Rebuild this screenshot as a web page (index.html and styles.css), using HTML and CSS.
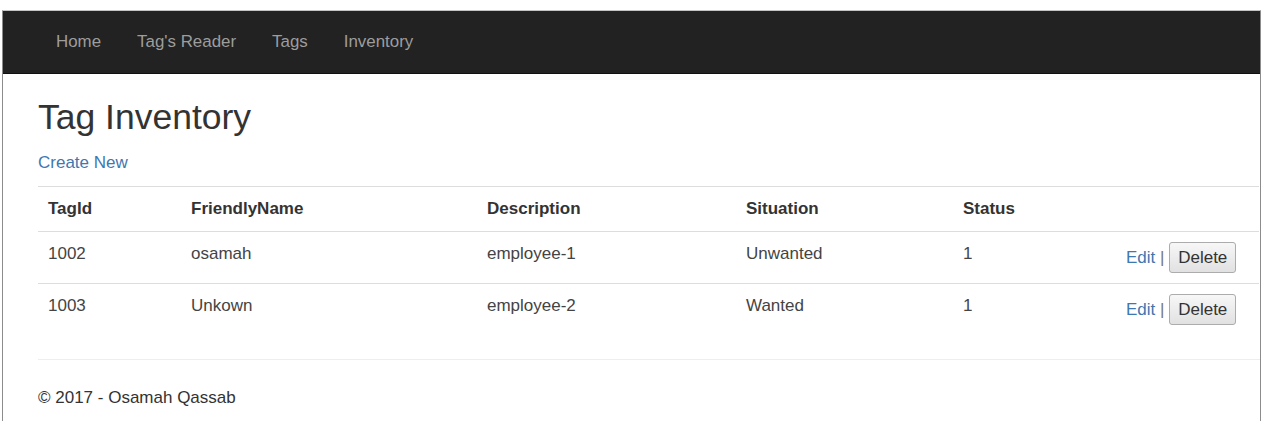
FILE: index.html
```html
<!DOCTYPE html>
<html lang="en">
<head>
<meta charset="utf-8">
<title>Tag Inventory</title>
<link rel="stylesheet" href="styles.css">
</head>
<body>
<div class="frame">
  <nav class="navbar">
    <ul class="nav">
      <li><a href="#">Home</a></li>
      <li><a href="#">Tag's Reader</a></li>
      <li><a href="#">Tags</a></li>
      <li><a href="#">Inventory</a></li>
    </ul>
  </nav>
  <main class="content">
    <h2 class="title">Tag Inventory</h2>
    <p class="create"><a href="#">Create New</a></p>
    <table class="table">
      <tr>
        <th class="c1">TagId</th>
        <th class="c2">FriendlyName</th>
        <th class="c3">Description</th>
        <th class="c4">Situation</th>
        <th class="c5">Status</th>
        <th class="c6"></th>
      </tr>
      <tr>
        <td>1002</td>
        <td>osamah</td>
        <td>employee-1</td>
        <td>Unwanted</td>
        <td>1</td>
        <td class="actions"><a href="#">Edit</a> <span class="sep">|</span> <button class="btn" type="button">Delete</button></td>
      </tr>
      <tr>
        <td>1003</td>
        <td>Unkown</td>
        <td>employee-2</td>
        <td>Wanted</td>
        <td>1</td>
        <td class="actions"><a href="#">Edit</a> <span class="sep">|</span> <button class="btn" type="button">Delete</button></td>
      </tr>
    </table>
    <hr class="rule">
    <footer class="footer">
      <p>&copy; 2017 - Osamah Qassab</p>
    </footer>
  </main>
</div>
</body>
</html>
```

FILE: styles.css
```css
html, body {
  margin: 0;
  padding: 0;
  background: #fff;
}

body {
  font-family: "Liberation Sans", Arial, sans-serif;
  font-size: 17px;
  line-height: 24px;
  color: #333;
}

.frame {
  margin: 10px 0 0 2px;
  width: 1259px;
  min-height: 411px;
  box-sizing: border-box;
  border-left: 1px solid #8c8c8c;
  border-right: 1px solid #8c8c8c;
  border-top: 1px solid #c4c4c4;
}

.navbar {
  height: 63px;
  background: #222;
  border-bottom: 1px solid #101010;
  box-sizing: border-box;
  display: flex;
  align-items: center;
  padding-left: 35px;
}

.nav {
  list-style: none;
  margin: 0;
  padding: 0;
  display: flex;
}

.nav a {
  display: block;
  padding: 0 18px;
  color: #9d9d9d;
  text-decoration: none;
  font-size: 16.9px;
}

.content {
  padding-left: 35px;
}

.title {
  margin: 24px 0 14px;
  font-size: 35.5px;
  line-height: 39px;
  font-weight: normal;
  color: #333;
}

.create {
  margin: 0 0 11px;
}

a {
  color: #3f77b0;
  text-decoration: none;
}

.table {
  width: 1221px;
  table-layout: fixed;
  border-collapse: collapse;
  border-spacing: 0;
  margin-bottom: 24px;
}

.table th,
.table td {
  padding: 10px;
  text-align: left;
  vertical-align: top;
  border-top: 1px solid #ddd;
  line-height: 24px;
}

.table th {
  font-weight: bold;
  color: #333;
}

.table td {
  color: #444;
}

.c1 { width: 123px; }
.c2 { width: 276px; }
.c3 { width: 239px; }
.c4 { width: 197px; }
.c5 { width: 143px; }
.c6 { width: 123px; }

.table td.actions {
  white-space: nowrap;
}

.actions a,
.actions .sep {
  vertical-align: middle;
}

.sep {
  color: #777;
}

.btn {
  display: inline-block;
  vertical-align: middle;
  height: 31px;
  box-sizing: border-box;
  padding: 0 8px;
  margin: 0;
  font-family: "Liberation Sans", Arial, sans-serif;
  font-size: 17px;
  line-height: 29px;
  color: #333;
  background: linear-gradient(#f7f7f7, #e1e1e1);
  border: 1px solid #acacac;
  border-radius: 3px;
}

.rule {
  margin: 0;
  border: 0;
  border-top: 1px solid #eee;
}

.footer p {
  margin: 26px 0 0;
}
```
